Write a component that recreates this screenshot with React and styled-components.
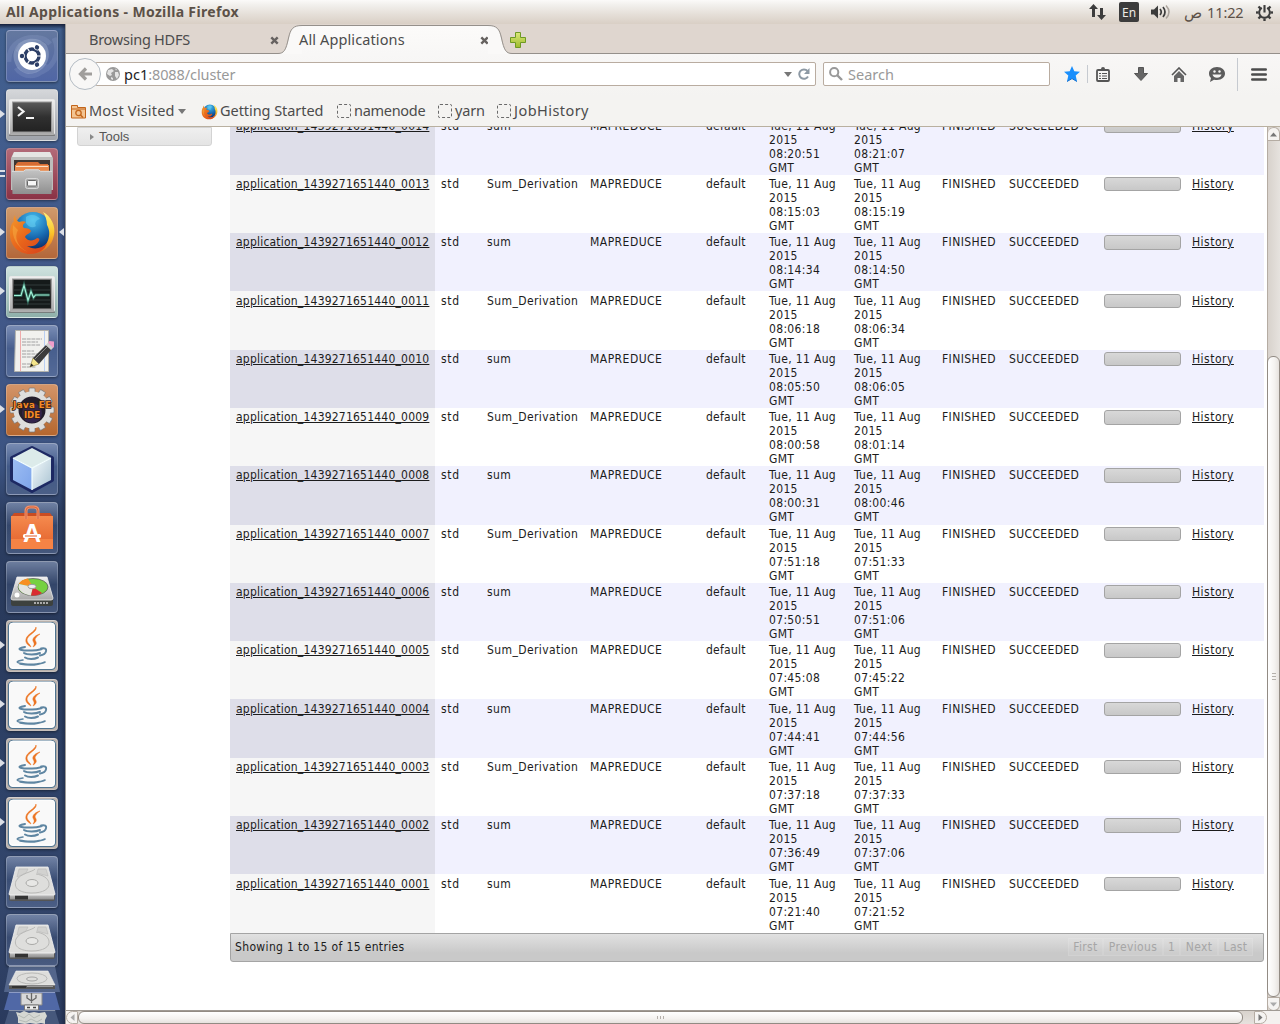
import React from "react";
import styled, { createGlobalStyle, css } from "styled-components";

const uiFont = '"Noto Sans", "Open Sans", sans-serif';
const pageFont = '"DejaVu Sans Condensed", "DejaVu Sans", sans-serif';

const GlobalStyle = createGlobalStyle`
  * { box-sizing: border-box; }
  body { margin: 0; overflow: hidden; background: #fff; }
  svg { display: block; flex: none; }
`;

const Desktop = styled.div`
  width: 1280px;
  height: 1024px;
  display: grid;
  grid-template: 24px 1000px / 65px 1215px;
  overflow: hidden;
  font-family: ${uiFont};
  color: #4c4c4c;
`;

/* ---------- system panel ---------- */
const Panel = styled.header`
  grid-column: 1 / 3;
  display: flex;
  align-items: center;
  padding: 0 7px 0 6px;
  background: linear-gradient(#fbfaf9 0, #f2f0ed 20%, #e5dfd8 60%, #d9cfc5 100%);
`;
const Label = styled.span`
  display: block;
  flex: none;
  white-space: pre;
  width: ${(p) => (p.$w ? p.$w + "px" : "auto")};
  font-size: ${(p) => p.$size || 14.5}px;
  font-weight: ${(p) => p.$weight || 400};
  letter-spacing: ${(p) => p.$ls || 0}px;
  color: ${(p) => p.$color || "#4c4c4c"};
  line-height: 20px;
`;
const Spacer = styled.div`
  flex: ${(p) => (p.$w ? "none" : 1)};
  width: ${(p) => p.$w || 0}px;
`;
const LangBadge = styled.span`
  width: 20px;
  height: 20px;
  border-radius: 2px;
  background: #3c3c3c;
  color: #efebe6;
  font-size: 12px;
  line-height: 21px;
  text-align: center;
`;

/* ---------- launcher ---------- */
const Launcher = styled.nav`
  display: flex;
  flex-direction: column;
  align-items: center;
  padding: 6px 1px 0 0;
  overflow: hidden;
  background:
    linear-gradient(#16203a 0, rgba(22, 32, 58, 0) 5px),
    linear-gradient(90deg, rgba(20, 30, 60, 0) 60px, rgba(20, 28, 50, 0.45) 65px),
    linear-gradient(#41608f 0, #43598a 25%, #3c5482 44%, #2c3e62 49%, #293a5c 60%, #2e4268 75%, #33466c 88%, #2a3a5d 100%);
`;
const Slot = styled.div`
  position: relative;
  flex: none;
  width: 64px;
  height: ${(p) => p.$h || 59}px;
  padding-left: 6px;
`;
const Tile = styled.div`
  width: 52px;
  height: 52px;
  border-radius: 4px;
  overflow: hidden;
  border: 1px solid rgba(255, 255, 255, 0.2);
  border-top-color: rgba(255, 255, 255, 0.4);
  box-shadow: 0 1px 3px rgba(0, 0, 0, 0.45);
  background: ${(p) => p.$bg};
  svg { margin: -1px; }
`;
const Pip = styled.i`
  position: absolute;
  top: ${(p) => p.$top || 21}px;
  border: 4px solid transparent;
  ${(p) =>
    p.$right
      ? css`right: 0; border-right: 5px solid #dcdfe6; border-left: 0;`
      : css`left: 0; border-left: 5px solid #dcdfe6; border-right: 0;`}
`;
const DoublePip = styled.i`
  position: absolute;
  left: 0;
  top: 22px;
  width: 5px;
  height: 7px;
  border: solid #dcdfe6;
  border-width: 2px 0;
`;
const Fold = styled.div`
  flex: none;
  width: 56px;
  height: ${(p) => p.$h}px;
  background: ${(p) => p.$bg};
  border-top: 1px solid rgba(255, 255, 255, 0.35);
  clip-path: polygon(5px 0, 51px 0, 100% 100%, 0 100%);
  overflow: hidden;
`;

/* ---------- browser ---------- */
const Browser = styled.main`
  display: grid;
  grid-template-rows: 30px 42px 31px 883px 14px;
  border-left: 1px solid #9d9a97;
  overflow: hidden;
  background: #fff;
`;
const TabStrip = styled.div`
  display: flex;
  background: #dfd6cf;
`;
const IdleTab = styled.div`
  width: 212px;
  display: flex;
  align-items: center;
  padding: 3px 0 0 23px;
  border-bottom: 1px solid #95908b;
`;
const ActiveTab = styled.div`
  width: 186px;
  display: flex;
  align-items: center;
  background: linear-gradient(#fcfbfa, #f8f7f6);
  border-top: 1px solid #95908b;
  margin-top: 1px;
  height: 29px;
`;
const TabTitle = styled(Label)`
  margin-bottom: 3px;
  margin-left: ${(p) => (p.$active ? -3 : 0)}px;
  z-index: 1;
`;
const StripRest = styled.div`
  flex: 1;
  border-bottom: 1px solid #95908b;
  padding-top: 8px;
  svg { margin-left: -2px; }
`;
const NavBar = styled.div`
  display: flex;
  align-items: center;
  padding: 0 12px 2px 3px;
  background: linear-gradient(#f8f7f6, #f4f3f1);
`;
const BackButton = styled.div`
  position: relative;
  flex: none;
  width: 32px;
  height: 32px;
  border: 1px solid #b4bcc4;
  border-radius: 50%;
  background: #f8f7f6;
  display: grid;
  place-items: center;
`;
const Field = styled.div`
  height: 24px;
  display: flex;
  align-items: center;
  flex: none;
  width: ${(p) => p.$w}px;
  background: #fff;
  border: 1px solid #b9aca0;
  border-radius: 2px;
`;
const UrlField = styled(Field)`
  margin-left: -6px;
  padding: 0 5px 0 10px;
`;
const SearchField = styled(Field)`
  margin-left: 7px;
  padding-left: 5px;
`;
const ToolIcon = styled.div`
  flex: none;
  width: ${(p) => p.$w || 38}px;
  display: grid;
  place-items: center;
`;
const Divider = styled.div`
  flex: none;
  width: 1px;
  height: ${(p) => p.$h}px;
  background: #c6cad0;
`;
const Bookmarks = styled.div`
  display: flex;
  align-items: center;
  padding: 0 0 0 5px;
  background: #f4f3f1;
  border-bottom: 1px solid #b9b0a0;
`;
const BookmarkText = styled(Label)`
  margin-bottom: 2px;
`;
const DashIcon = styled.span`
  flex: none;
  width: 14px;
  height: 14px;
  border: 1px dashed #6a6a6a;
  border-radius: 2px;
  margin: 0 3px 0 0;
`;
const Triangle = styled.span`
  width: 0;
  height: 0;
  border: 4.5px solid transparent;
  border-top: 5px solid #777;
  border-bottom: 0;
`;

/* ---------- page ---------- */
const Viewport = styled.div`
  display: grid;
  grid-template-columns: 164px 1034px 3px 13px;
  overflow: hidden;
  font-family: ${pageFont};
  font-size: 12px;
  line-height: 14px;
  color: #1c1c1c;
`;
const Sidebar = styled.aside`
  padding-left: 11px;
`;
const ToolsHeader = styled.div`
  width: 135px;
  height: 19px;
  display: flex;
  align-items: center;
  gap: 5px;
  padding-left: 12px;
  border: 1px solid #d3d3d3;
  border-radius: 0 0 3px 3px;
  background: linear-gradient(#efefef, #e4e4e4);
  font: 13px/18px "Liberation Sans", Arial, sans-serif;
  color: #555;
`;
const ToolsArrow = styled.span`
  border: 3px solid transparent;
  border-left: 4px solid #888;
  border-right: 0;
`;
const Listing = styled.section`
  margin-top: -10.55px;
`;
const Row = styled.div`
  height: 58.3px;
  display: grid;
  grid-template-columns: 205px 46px 103px 116px 63px 85px 88px 67px 95px 88px 1fr;
  background: ${(p) => (p.$even ? "#f1f1fe" : "#fff")};
`;
const Cell = styled.div`
  padding: 2.2px 0 0 6px;
  white-space: nowrap;
  letter-spacing: ${(p) => p.$ls || 0}px;
`;
const IdCell = styled(Cell)`
  background: ${(p) => (p.$even ? "#dedee9" : "#f6f6f6")};
`;
const DateCell = styled(Cell)`
  white-space: pre-line;
`;
const Link = styled.a`
  color: #1c1c1c;
  text-decoration: underline;
  text-underline-offset: 1px;
`;
const Progress = styled.div`
  width: 77px;
  height: 14.4px;
  border: 1px solid #a4a4a4;
  border-radius: 3px;
  background: linear-gradient(#d8d8d8, #c8c8c8);
`;
const Footer = styled.div`
  height: 29px;
  display: flex;
  align-items: center;
  padding: 0 10px 1px 4px;
  border: 1px solid #a4a4a4;
  border-radius: 0 0 3px 3px;
  background: linear-gradient(#e1e1e1, #c9c9c9 70%);
  letter-spacing: 0.35px;
`;
const Pager = styled.div`
  margin-left: auto;
  display: flex;
`;
const PageButton = styled.span`
  width: ${(p) => p.$w}px;
  height: 18px;
  line-height: 17px;
  text-align: center;
  color: #a6a6a6;
  border: 1px solid rgba(255, 255, 255, 0.1);
  background: rgba(255, 255, 255, 0.08);
`;
const VBar = styled.div`
  grid-column: 4;
  display: flex;
  flex-direction: column;
  background: linear-gradient(90deg, #d8d2cc, #e6e2de);
  border-left: 1px solid #b5aca3;
`;
const VButton = styled.div`
  height: 14px;
  flex: none;
  display: grid;
  place-items: center;
  border: 1px solid #b5aca3;
  border-left: 0;
  border-radius: ${(p) => (p.$down ? "0 0 7px 7px" : "7px 7px 0 0")};
  background: #f5f3f1;
`;
const VThumb = styled.div`
  height: 641px;
  margin: 215px 0 0 -1px;
  border: 1px solid #928b84;
  border-radius: 6px;
  background: linear-gradient(90deg, #fff, #f4f2f0 60%, #e6e2de);
  display: grid;
  place-items: center;
`;
const HBar = styled.div`
  display: flex;
  border-top: 1px solid #a09a94;
  background: #f4f1ef;
  padding-right: 13px;
`;
const HTrack = styled.div`
  flex: 1;
  display: flex;
  height: 13px;
  background: linear-gradient(#d8d2cc, #e6e2de);
`;
const HButton = styled.div`
  width: ${(p) => (p.$right ? 13 : 12)}px;
  height: 13px;
  display: grid;
  place-items: center;
  border: 1px solid #b5aca3;
  border-radius: ${(p) => (p.$right ? "0 7px 7px 0" : "7px 0 0 7px")};
  background: #f5f3f1;
`;
const HThumb = styled.div`
  width: 1165px;
  border: 1px solid #928b84;
  border-radius: 6px;
  background: linear-gradient(#fff, #f4f2f0 60%, #e6e2de);
  display: grid;
  place-items: center;
`;

/* ---------- drawings ---------- */
const Svg = ({ w, h = w, children, box }) => (
  <svg width={w} height={h} viewBox={box || `0 0 ${w} ${h}`} fill="none">{children}</svg>
);

const GradientDefs = styled.svg`
  width: 0;
  height: 0;
`;
const Gradients = () => (
  <GradientDefs>
    <defs>
      <linearGradient id="silver" x2="0" y2="1"><stop stopColor="#efefef" /><stop offset="1" stopColor="#a9a9a9" /></linearGradient>
      <linearGradient id="cabinet" x2="0" y2="1"><stop stopColor="#c4c4c4" /><stop offset="1" stopColor="#8f8f8f" /></linearGradient>
      <linearGradient id="screen" x2="0" y2="1"><stop stopColor="#5a5a5a" /><stop offset=".5" stopColor="#303030" /><stop offset="1" stopColor="#222" /></linearGradient>
      <linearGradient id="orange" x2="0" y2="1"><stop stopColor="#f58a4e" /><stop offset="1" stopColor="#e2602a" /></linearGradient>
      <radialGradient id="globe" cx=".5" cy=".2" r=".8"><stop stopColor="#49c0ef" /><stop offset=".6" stopColor="#1767ae" /><stop offset="1" stopColor="#0d2c66" /></radialGradient>
      <linearGradient id="fox" x1="0" y1="0" x2="1" y2="1"><stop stopColor="#f39a2c" /><stop offset=".5" stopColor="#e8641b" /><stop offset="1" stopColor="#d5401d" /></linearGradient>
      <linearGradient id="foxtail" x2="0" y2="1"><stop stopColor="#fff27a" /><stop offset=".5" stopColor="#fbc52b" /><stop offset="1" stopColor="#e8641b" /></linearGradient>
      <linearGradient id="cubeL" x2="1" y2="1"><stop stopColor="#9dbdf3" /><stop offset="1" stopColor="#7da4ea" /></linearGradient>
      <linearGradient id="cubeR" x2="1" y2="1"><stop stopColor="#f4fafc" /><stop offset="1" stopColor="#a9c3d2" /></linearGradient>
      <linearGradient id="plus" x2="0" y2="1"><stop stopColor="#dbe87a" /><stop offset="1" stopColor="#9dbb2c" /></linearGradient>
    </defs>
  </GradientDefs>
);

const Ubuntu = () => (
  <Svg w={52}>
    <path d="M3 32C2 14 18 4 36 9M48 8c8 16-2 32-18 36M12 22C18 6 36 4 44 14M40 34C34 50 16 48 10 38" stroke="#a9b9dd" strokeWidth="5" opacity=".18" />
    <path d="M8 30C4 12 26 2 40 14c8 14-2 30-18 30C14 42 10 38 8 30Z" fill="#c4cfe8" opacity=".3" />
    <circle cx="26" cy="26" r="14" fill="#fff" />
    <circle cx="26" cy="26" r="7" stroke="#2c3e66" strokeWidth="3.4" />
    {[180, 60, -60].map((a) => (
      <g key={a} transform={`rotate(${a} 26 26)`}>
        <circle cx="36.3" cy="26" r="3.2" fill="#fff" />
        <circle cx="36" cy="26" r="2.2" fill="#2c3e66" />
      </g>
    ))}
    {[0, 120, 240].map((a) => <path key={a} d="M31 26h4" stroke="#fff" strokeWidth="1.2" transform={`rotate(${a} 26 26)`} />)}
  </Svg>
);
const Screen = ({ children }) => (
  <>
    <path d="M3 45h46v2H3z" fill="#666" opacity=".6" />
    <rect x="3.5" y="10.5" width="45" height="35" rx="1" fill="url(#silver)" stroke="#e8e8e8" />
    <path d="M4 46h44" stroke="#777" />
    <rect x="6.5" y="13" width="39" height="30" fill="url(#screen)" stroke="#999" />
    {children}
  </>
);
const Terminal = () => (
  <Svg w={52}><Screen><path d="M12 18l5.5 4.5L12 27M20 29h8" stroke="#f4f4f4" strokeWidth="2.2" /></Screen></Svg>
);
const Monitor = () => (
  <Svg w={52}>
    <Screen>
      <rect x="8" y="14" width="36" height="28" fill="#151a1a" />
      <path d="M8 19h36M8 24h36M8 34h36M8 38h36" stroke="#3b4444" strokeWidth=".8" />
      <path d="M8 29.5h7l3-10 4 15 3-9 2.5 6 2-2.500h14" stroke="#3f9c83" strokeWidth="3" opacity=".5" />
      <path d="M8 29.5h7l3-10 4 15 3-9 2.5 6 2-2.500h14" stroke="#9ff0d6" strokeWidth="1.2" />
    </Screen>
  </Svg>
);
const Files = () => (
  <Svg w={52}>
    <path d="M8 4h36l3 6v32H5V10z" fill="#bdbdbb" />
    <path d="M8 4h36l2 5H6z" fill="#e5e5e3" />
    <path d="M8 12h36v12H8z" fill="#3f3733" />
    <path d="M10 16l2-2h20l2 2h8v8H10z" fill="#d66d34" /><path d="M9 17h34v6H9z" fill="#ea8a4c" /><path d="M10 18.5h32" stroke="#fbe0c5" />
    <path d="M5.500 23h12l2-1.500h13l2 1.500h12l-1 23h-39z" fill="url(#cabinet)" />
    <path d="M6 23.300h11.500l2-1.500h13l2 1.500H46" stroke="#dcdcdc" />
    <rect x="19.500" y="30.500" width="13" height="10" rx="2" fill="#a9a9a9" stroke="#d8d8d8" />
    <rect x="21.500" y="32.500" width="9" height="5.500" rx="1" fill="#f5f5f5" stroke="#666" />
  </Svg>
);
const FoxShapes = () => (
  <>
    <circle cx="27" cy="24" r="19" fill="url(#globe)" />
    <path d="M20 10c6-4 12-1 14 2-4 1-6 4-4 7-4 3-8 0-10-3z" fill="#67cdf0" opacity=".6" />
    <path d="M37 5c8 4 13 14 11 23-2 13-14 20-25 18 12-1 19-8 20-17 1-5-1-9-2-11 0-5-2-10-4-13Z" fill="url(#foxtail)" />
    <path d="M9 8c0 3 2 6 4 7 3-1 5-1 7 0-3 2-4 4-2 6 4 0 6 1 7 3-1 3-5 3-6 6 3 5 9 4 12 1 2 0 3 1 2 3-3 5-7 6-12 5 6 4 15 3 20-3-2 7-9 11-17 11C12 47 4 38 4 27 4 21 5 17 8 14c-1-2 0-4 1-6Z" fill="url(#fox)" />
    <path d="M7 18c-2 12 4 23 15 27C11 40 8 30 12 23" fill="#f8b044" opacity=".5" />
  </>
);
const Firefox = () => <Svg w={52}><FoxShapes /></Svg>;
const FirefoxSmall = () => <Svg w={17} box="2 2 48 46"><FoxShapes /></Svg>;
const Editor = () => (
  <Svg w={52}>
    <path d="M9.5 5.5h33v41h-34z" fill="#f1f1ee" stroke="#b3b3ad" />
    <path d="M14.5 6v40" stroke="#efaaaa" /><path d="M38.5 6v40" stroke="#b9cff2" />
    <path d="M16 14h20M16 17h16M16 20h18M16 26h12M16 29h16M16 32h12M16 39h10M16 42h14" stroke="#999" strokeWidth=".9" strokeDasharray="4 .7" />
    <path d="M24 42l3-9 6 6z" fill="#f4e58a" stroke="#8b7a35" strokeWidth=".6" />
    <path d="M24 42l1.3-3.600 2.200 2.200z" fill="#222" />
    <path d="M27 33l13-13 5 5-12 14z" fill="#3b3b3b" /><path d="M29 34l13-13" stroke="#888" />
    <path d="M40 20l2-2.500 5.500 5L45 25z" fill="#cfcfcf" /><path d="M42 17.500l1.500-1.500 4.500.5v5l-1 1.500z" fill="#ef9ecb" />
  </Svg>
);
const JavaEE = () => (
  <Svg w={52}>
    {Array.from({ length: 12 }, (_, i) => (
      <rect key={i} x="23" y="4" width="6" height="9" rx="1" fill="#ddd" stroke="#777" strokeWidth=".7" transform={`rotate(${i * 30} 26 26)`} />
    ))}
    <circle cx="26" cy="26" r="16" fill="#231d2b" stroke="#dededc" strokeWidth="5" />
    <circle cx="26" cy="29" r="10" fill="#3b2a5a" opacity=".7" />
    <g fontFamily="DejaVu Sans" fontWeight="700" fontSize="8.600" textAnchor="middle" fill="#f48a27" stroke="#352016" strokeWidth="1.600" paintOrder="stroke">
      <text x="26" y="24" textLength="38">Java EE</text><text x="26" y="34" textLength="16">IDE</text>
    </g>
  </Svg>
);
const Cube = () => (
  <Svg w={52}>
    <path d="M26 5l20 10v22L26 48 6 37V15z" fill="#1d2963" stroke="#1d2963" strokeWidth="4" strokeLinejoin="round" />
    <path d="M26 5l19 10-19 10L7 15z" fill="#dcebea" /><path d="M7 15l19 10v22L7 37z" fill="url(#cubeL)" /><path d="M45 15L26 25v22l19-10z" fill="url(#cubeR)" />
    <path d="M7 15l19 10 19-10M26 25v22" stroke="#f4ffff" strokeWidth="1.2" />
  </Svg>
);
const Bag = () => (
  <Svg w={52}>
    <path d="M8 11h36l3 4v5H5v-5z" fill="#c94c22" />
    <path d="M5 14h42v33H5z" fill="url(#orange)" />
    <path d="M5 37h42v10H5z" fill="#f58345" />
    <path d="M20 17V9q0-4 4-4h4q4 0 4 4v8" stroke="#f0916a" strokeWidth="3" /><path d="M20 17V9q0-4 4-4h4q4 0 4 4v8" stroke="#c94c22" strokeWidth=".6" />
    <text x="26" y="40" textAnchor="middle" fontFamily="Liberation Sans" fontWeight="700" fontSize="25" fill="#fff">A</text>
    <rect x="17" y="32" width="18" height="4" rx="1.5" fill="#fff" /><path d="M19 34h12" stroke="#e2602a" strokeWidth="1.2" />
  </Svg>
);
const Gparted = () => (
  <Svg w={52}>
    <path d="M5 36h42v7q0 2-2 2H7q-2 0-2-2z" fill="#3d413e" />
    <path d="M11 16h30l6 21q0 2-2 2H7q-2 0-2-2z" fill="url(#silver)" stroke="#eee" strokeWidth=".8" />
    <ellipse cx="27" cy="26" rx="15" ry="8.5" fill="#76d141" stroke="#555" strokeWidth=".7" />
    <path d="M27 26L13 23c1-3 5-5 9-5.500z" fill="#f78f22" /><path d="M27 26L13 23c-2 5 2 10 12 11.500z" fill="#e4e4e0" /><path d="M27 26l-2 8.500c4 .4 8-.5 11-2.500z" fill="#d92c31" />
    <ellipse cx="26" cy="25.5" rx="4" ry="2.2" fill="#eee" stroke="#999" />
    <path d="M28 42h14" stroke="#aaa" strokeWidth="2" strokeDasharray="2 1" /><circle cx="11" cy="34" r="2.5" fill="#fff" />
  </Svg>
);
const Java = () => (
  <Svg w={52}>
    <rect x="2.5" y="2.5" width="47" height="47" rx="4" fill="#f6f6f6" stroke="#4f7490" strokeWidth="1.2" />
    <rect x="3.500" y="3" width="45" height="45" rx="3.500" fill="#f9f9f9" stroke="#fff" strokeWidth="1" />
    <path d="M30 7c2 5-9 8-9 13 0 3 3 4 4 7-3-2-6-4-5-8 1-5 9-7 10-12ZM34 14c-4 1-8 4-7 7 1 2 2 3 0 6 5-3 3-5 2-7 0-2 2-4 5-6Z" fill="#ec7422" stroke="#ec7422" strokeWidth=".5" />
    <g stroke="#5f86a2" strokeWidth="2" strokeLinecap="round">
      <path d="M19 27c-12 2-2 4 7 3.500 5 0 8-1 10-1.500M18 33c3 2 12 2 16 0M19 37.500c3 2 9 2 13 0M35 28.500c8-2 6 6-1 7" />
      <path d="M17 40c-8 1-8 3 2 4 7 .8 17 0 20-2M14 44c8 1.500 18 1.200 25-2" strokeWidth="1.6" />
    </g>
  </Svg>
);
const Drive = () => (
  <Svg w={52}>
    <path d="M3 38h46v5q0 2-2 2H5q-2 0-2-2z" fill="#555" /><path d="M4 38.500h44v5H4z" fill="url(#cabinet)" /><path d="M9 39.500h13v4H9z" fill="#333" />
    <path d="M10 11h32l7 27q0 1-1 1H4q-1 0-1-1z" fill="#dededc" stroke="#f4f4f4" strokeWidth=".8" />
    <path d="M13 13h9l-2 4-9 4zM32 13h8l2 7-11-3z" fill="#d2d2d0" stroke="#bbb" strokeWidth=".6" />
    <path d="M29 13c-2 3-15 4-19 12-3 8 5 12 16 12s18-4 17-10c-1-5-6-8-13-9" stroke="#b9b9b7" />
    <ellipse cx="26" cy="27" rx="6" ry="3.5" fill="#e7e7e5" stroke="#a9a9a7" />
  </Svg>
);

const Net = () => <Svg w={17} h={16}><path d="M4.500 0L9 5H6v8H3V5H0zM12.500 16L17 11h-3V4h-3v7H8z" fill="#3c3c3c" /></Svg>;
const Volume = () => (
  <Svg w={20} h={16}>
    <path d="M0 5.500h3l4-4v13l-4-4H0z" fill="#3c3c3c" />
    <path d="M9 5q2.500 3 0 6M12 3q4 5 0 10" stroke="#3c3c3c" strokeWidth="1.7" /><path d="M15 1.500q6 6.500 0 13" stroke="#aaa39c" strokeWidth="1.5" />
  </Svg>
);
const Gear = () => (
  <Svg w={17} box="0 0 16 16">
    <path d="M5.500 3.600a5 5 0 1 0 5 0" stroke="#3c3c3c" strokeWidth="1.8" /><path d="M8 1v7" stroke="#3c3c3c" strokeWidth="2" />
    {[45, 90, 135, 180, 225, 270, 315].map((a) => <path key={a} d="M8 0v2.500" stroke="#3c3c3c" strokeWidth="2.2" transform={`rotate(${a} 8 8)`} />)}
  </Svg>
);
const Close = () => <Svg w={9}><path d="M1.300 1.300l6.400 6.400M7.700 1.300L1.300 7.700" stroke="#666260" strokeWidth="2.4" /></Svg>;
const Plus = () => <Svg w={16}><path d="M5.500.5h5v5h5v5h-5v5h-5v-5h-5v-5h5z" fill="url(#plus)" stroke="#6e9a23" /></Svg>;
const CurveLeft = () => (
  <Svg w={24} h={30}>
    <path d="M0 30h24V1.500C14 1.500 13 5 11 14 8 26 6 29.500 0 29.500Z" fill="#faf9f8" />
    <path d="M0 29.500C6 29.500 8 26 10.500 14 12.500 5 15 1.500 24 1.500" stroke="#95908b" />
  </Svg>
);
const CurveRight = () => (
  <Svg w={24} h={30}>
    <path d="M24 30H0V1.500C10 1.500 11 5 13 14 16 26 18 29.500 24 29.500Z" fill="#faf9f8" />
    <path d="M24 29.500C18 29.500 16 26 13.500 14 11.500 5 9 1.500 0 1.500" stroke="#95908b" />
  </Svg>
);
const Back = () => <Svg w={14}><path d="M8 1.500L2.500 7 8 12.500M3 7h11" stroke="#a09e9c" strokeWidth="3.2" /></Svg>;
const Globe = () => (
  <Svg w={14}><circle cx="7" cy="7" r="7" fill="#999" /><path d="M2 3l4-1 2 2-3 2 1 2-2 1-3-2zM9 5l3 0 1 3-2 4-2-3zM5 10l2 1v2l-2-1zM9 1.500l2 1-1 1z" fill="#e4e4e4" /></Svg>
);
const Reload = () => <Svg w={12}><path d="M10 8.500A4.700 4.700 0 1 1 9.500 3" stroke="#8d99a4" strokeWidth="2" /><path d="M11.500 0v6H6z" fill="#8d99a4" /></Svg>;
const Search = () => <Svg w={14}><circle cx="5.2" cy="5.2" r="4.1" stroke="#999" strokeWidth="2" /><path d="M8 8l5 5" stroke="#999" strokeWidth="2.4" /></Svg>;
const Star = () => <Svg w={16}><path d="M8 0l2.300 5.200 5.700.6-4.300 3.800 1.300 5.900L8 12.600 3 15.500l1.300-5.900L0 5.800l5.700-.6z" fill="#1a8ffc" /><path d="M3 15.500l5-2.900 5 2.900" stroke="#0f6ed0" /></Svg>;
const Clipboard = () => (
  <Svg w={14} h={15}>
    <rect x="1" y="3" width="12" height="11" rx="1" stroke="#555" strokeWidth="1.800" /><path d="M3 4V2h2q0-2 2-2t2 2h2v2z" fill="#555" />
    <path d="M3 6.500h2M6 6.500h5M3 9h2M6 9h5M3 11.500h2M6 11.500h5" stroke="#555" strokeWidth="1.2" />
  </Svg>
);
const Down = () => <Svg w={14}><path d="M4.500.5h5v6h4L7 13.500.500 6.500h4z" fill="#666" stroke="#555" /></Svg>;
const Home = () => <Svg w={16} h={15}><path d="M1 8l7-7 7 7" stroke="#555" strokeWidth="1.6" /><path d="M3 9l5-5 5 5v6H9.500v-4h-3v4H3z" fill="#666" /></Svg>;
const Chat = () => (
  <Svg w={16} h={15}>
    <path d="M8 0c5 0 8 3 8 6.500S13 13 8 13c-1 0-2 0-3-.3L1 15l1-4C.6 10 0 8 0 6.500 0 3 3 0 8 0Z" fill="#5c5c5c" />
    <circle cx="5.5" cy="4.5" r="1.2" fill="#f4f3f1" /><circle cx="10.5" cy="4.5" r="1.2" fill="#f4f3f1" /><path d="M3.500 7.500h9q-1 3.200-4.500 3.200T3.500 7.500z" fill="#f4f3f1" />
  </Svg>
);
const Menu = () => <Svg w={16} h={13}><path d="M1.200 1.500h13.600M1.200 6.500h13.600M1.200 11.500h13.600" stroke="#4c4c4c" strokeWidth="2.4" strokeLinecap="round" /></Svg>;
const Folder = () => (
  <Svg w={15}>
    <path d="M.5 1.500h6v2h8v10.500H.5z" fill="#f3c492" stroke="#c2651b" /><path d="M1 5h13" stroke="#c2651b" />
    <circle cx="7.5" cy="9" r="2.7" stroke="#c2651b" strokeWidth="1.3" /><path d="M9.500 11l2.500 2.500" stroke="#c2651b" strokeWidth="1.5" />
  </Svg>
);
const FoldedDrive = () => (
  <Svg w={56} h={26}>
    <path d="M5 18h46v4H5z" fill="#555" /><path d="M8 19h14v2H8z" fill="#333" /><path d="M23 19.500h26" stroke="#999" />
    <path d="M12 4h32l7 14H5z" fill="#dededc" stroke="#f4f4f4" strokeWidth=".6" />
    <ellipse cx="28" cy="11.5" rx="15" ry="5.5" stroke="#b9b9b7" /><ellipse cx="28" cy="12" rx="5.5" ry="2" stroke="#a5a5a5" />
  </Svg>
);
const Usb = () => (
  <Svg w={56} h={18}>
    <path d="M17 0h21v12H17z" fill="#d9d9d9" stroke="#888" /><path d="M27.500 0v10M23 2v3l4.500 3 4.500-3V2" stroke="#666" strokeWidth="1.3" />
    <path d="M20.500 12h14v5h-14z" fill="#eee" stroke="#777" /><path d="M23 14.500h3M29 14.500h3" stroke="#444" strokeWidth="1.5" />
  </Svg>
);
const Trash = () => (
  <Svg w={56} h={15}>
    <path d="M12 1l4 1 4-2 5 2 5-1 5 1 6-1 2 4-2 4v4l-4-1-5 1-6-1-5 1-7-1v-5z" fill="#d5d8d3" />
    <path d="M14 4l6 3 5-4 5 4 6-3M15 9l7 2 5-3 6 3 5-3" stroke="#b4bab5" />
  </Svg>
);
const Arrow = ({ turn = 0, color = "#777" }) => <Svg w={7}><path d="M0 5.500L3.500 1.500 7 5.500z" fill={color} transform={`rotate(${turn} 3.500 3.500)`} /></Svg>;
const Grip = ({ vertical }) => (
  <Svg w={7}><path d={vertical ? "M2 .5h4M2 3.500h4M2 6.500h4" : "M.5 2v3M3.500 2v3M6.500 2v3"} stroke="#b5b0ab" /></Svg>
);

/* ---------- data ---------- */
const glass = "linear-gradient(rgba(190,205,235,.45), rgba(120,145,190,.12) 45%, rgba(140,160,200,.28))";
const launcherItems = [
  { icon: <Ubuntu />, bg: "linear-gradient(#64789f, #5066a5)" },
  { icon: <Terminal />, bg: "linear-gradient(#d5d7da, #9fa3aa)", pip: true },
  { icon: <Files />, bg: "linear-gradient(#b26a78, #8b3245)", pair: true },
  { icon: <Firefox />, bg: "linear-gradient(#d09a6b, #b3673a)", pip: true, focus: true },
  { icon: <Monitor />, bg: "linear-gradient(#cfe2df, #8fb0aa)", pip: true },
  { icon: <Editor />, bg: glass },
  { icon: <JavaEE />, bg: "linear-gradient(#d39468, #b5672f)", pip: true },
  { icon: <Cube />, bg: glass },
  { icon: <Bag />, bg: glass },
  { icon: <Gparted />, bg: glass },
  { icon: <Java />, bg: "#b9b1ac", pip: true },
  { icon: <Java />, bg: "#b9b1ac", pip: true },
  { icon: <Java />, bg: "#b9b1ac", pip: true },
  { icon: <Java />, bg: "#b9b1ac", pip: true },
  { icon: <Drive />, bg: glass, h: 58 },
  { icon: <Drive />, bg: glass, h: 52 },
];

const apps = [
  ["0014", "sum", "08:20:51", "08:21:07"],
  ["0013", "Sum_Derivation", "08:15:03", "08:15:19"],
  ["0012", "sum", "08:14:34", "08:14:50"],
  ["0011", "Sum_Derivation", "08:06:18", "08:06:34"],
  ["0010", "sum", "08:05:50", "08:06:05"],
  ["0009", "Sum_Derivation", "08:00:58", "08:01:14"],
  ["0008", "sum", "08:00:31", "08:00:46"],
  ["0007", "Sum_Derivation", "07:51:18", "07:51:33"],
  ["0006", "sum", "07:50:51", "07:51:06"],
  ["0005", "Sum_Derivation", "07:45:08", "07:45:22"],
  ["0004", "sum", "07:44:41", "07:44:56"],
  ["0003", "Sum_Derivation", "07:37:18", "07:37:33"],
  ["0002", "sum", "07:36:49", "07:37:06"],
  ["0001", "sum", "07:21:40", "07:21:52"],
];
const stamp = (t) => `Tue, 11 Aug\n2015\n${t}\nGMT`;

export default function App() {
  return (
    <Desktop>
      <GlobalStyle />
      <Panel>
        <Label $size={14} $weight={700} $ls={0.34} $color="#5c5148">All Applications - Mozilla Firefox</Label>
        <Spacer />
        <Gradients />
        <Net /><Spacer $w={13} />
        <LangBadge>En</LangBadge><Spacer $w={12} />
        <Volume /><Spacer $w={13} />
        <Label $w={23} $color="#5c5148">ص</Label>
        <Label $w={49} $ls={-0.1} $color="#5c5148">11:22</Label>
        <Gear />
      </Panel>

      <Launcher>
        {launcherItems.map((it, i) => (
          <Slot key={i} $h={it.h}>
            <Tile $bg={it.bg}>{it.icon}</Tile>
            {it.pip && <Pip />}
            {it.pair && <DoublePip />}
            {it.focus && <Pip $right />}
          </Slot>
        ))}
        <Fold $h={26} $bg="rgba(140,160,200,.4)"><FoldedDrive /></Fold>
        <Fold $h={18} $bg="#5068a6"><Usb /></Fold>
        <Fold $h={16} $bg="#46587c"><Trash /></Fold>
      </Launcher>

      <Browser>
        <TabStrip>
          <IdleTab><TabTitle $w={181} $ls={-0.25}>Browsing HDFS</TabTitle><Close /></IdleTab>
          <CurveLeft />
          <ActiveTab><TabTitle $active $w={181} $ls={0.12}>All Applications</TabTitle><Close /></ActiveTab>
          <CurveRight />
          <StripRest><Plus /></StripRest>
        </TabStrip>

        <NavBar>
          <BackButton><Back /></BackButton>
          <UrlField $w={721}>
            <Globe /><Spacer $w={4} />
            <Label $color="#222">pc1</Label><Label $ls={-0.1} $color="#999">:8088/cluster</Label>
            <Spacer /><Triangle /><Spacer $w={6} /><Reload />
          </UrlField>
          <SearchField $w={227}>
            <Search /><Spacer $w={5} /><Label $color="#999">Search</Label>
          </SearchField>
          <Spacer $w={10} />
          <ToolIcon $w={24}><Star /></ToolIcon>
          <Spacer $w={3} /><Divider $h={18} />
          <Spacer $w={5} />
          <ToolIcon $w={20}><Clipboard /></ToolIcon>
          <Spacer $w={9} />
          <ToolIcon><Down /></ToolIcon>
          <ToolIcon><Home /></ToolIcon>
          <ToolIcon><Chat /></ToolIcon>
          <Spacer $w={1} />
          <Divider $h={33} />
          <Spacer />
          <Menu /><Spacer $w={1} />
        </NavBar>

        <Bookmarks>
          <Folder /><Spacer $w={3} /><BookmarkText $w={89} $ls={0.2}>Most Visited</BookmarkText><Triangle /><Spacer $w={15} />
          <FirefoxSmall /><Spacer $w={2} /><BookmarkText $w={117} $ls={-0.05}>Getting Started</BookmarkText>
          <DashIcon /><BookmarkText $w={84} $ls={-0.3}>namenode</BookmarkText>
          <DashIcon /><BookmarkText $w={42} $ls={-0.2}>yarn</BookmarkText>
          <DashIcon /><BookmarkText $ls={0.45}>JobHistory</BookmarkText>
        </Bookmarks>

        <Viewport>
          <Sidebar><ToolsHeader><ToolsArrow />Tools</ToolsHeader></Sidebar>
          <Listing>
            {apps.map(([id, name, start, finish], i) => {
              const even = i % 2 === 0;
              return (
                <Row key={id} $even={even}>
                  <IdCell $even={even} $ls={0.21}><Link>application_1439271651440_{id}</Link></IdCell>
                  <Cell $ls={0.65}>std</Cell>
                  <Cell $ls={0.4}>{name}</Cell>
                  <Cell $ls={0.47}>MAPREDUCE</Cell>
                  <Cell $ls={0.25}>default</Cell>
                  <DateCell $ls={0.33}>{stamp(start)}</DateCell>
                  <DateCell $ls={0.33}>{stamp(finish)}</DateCell>
                  <Cell $ls={0.4}>FINISHED</Cell>
                  <Cell $ls={0.36}>SUCCEEDED</Cell>
                  <Cell><Progress /></Cell>
                  <Cell $ls={0.5}><Link>History</Link></Cell>
                </Row>
              );
            })}
            <Footer>
              Showing 1 to 15 of 15 entries
              <Pager>
                <PageButton $w={35}>First</PageButton>
                <PageButton $w={60}>Previous</PageButton>
                <PageButton $w={17}>1</PageButton>
                <PageButton $w={38}>Next</PageButton>
                <PageButton $w={35}>Last</PageButton>
              </Pager>
            </Footer>
          </Listing>
          <VBar>
            <VButton><Arrow /></VButton>
            <VThumb><Grip vertical /></VThumb>
            <VButton $down><Arrow turn={180} color="#aaa" /></VButton>
          </VBar>
        </Viewport>

        <HBar>
          <HButton><Arrow turn={-90} color="#aaa" /></HButton>
          <HTrack><HThumb><Grip /></HThumb></HTrack>
          <HButton $right><Arrow turn={90} /></HButton>
        </HBar>
      </Browser>
    </Desktop>
  );
}
